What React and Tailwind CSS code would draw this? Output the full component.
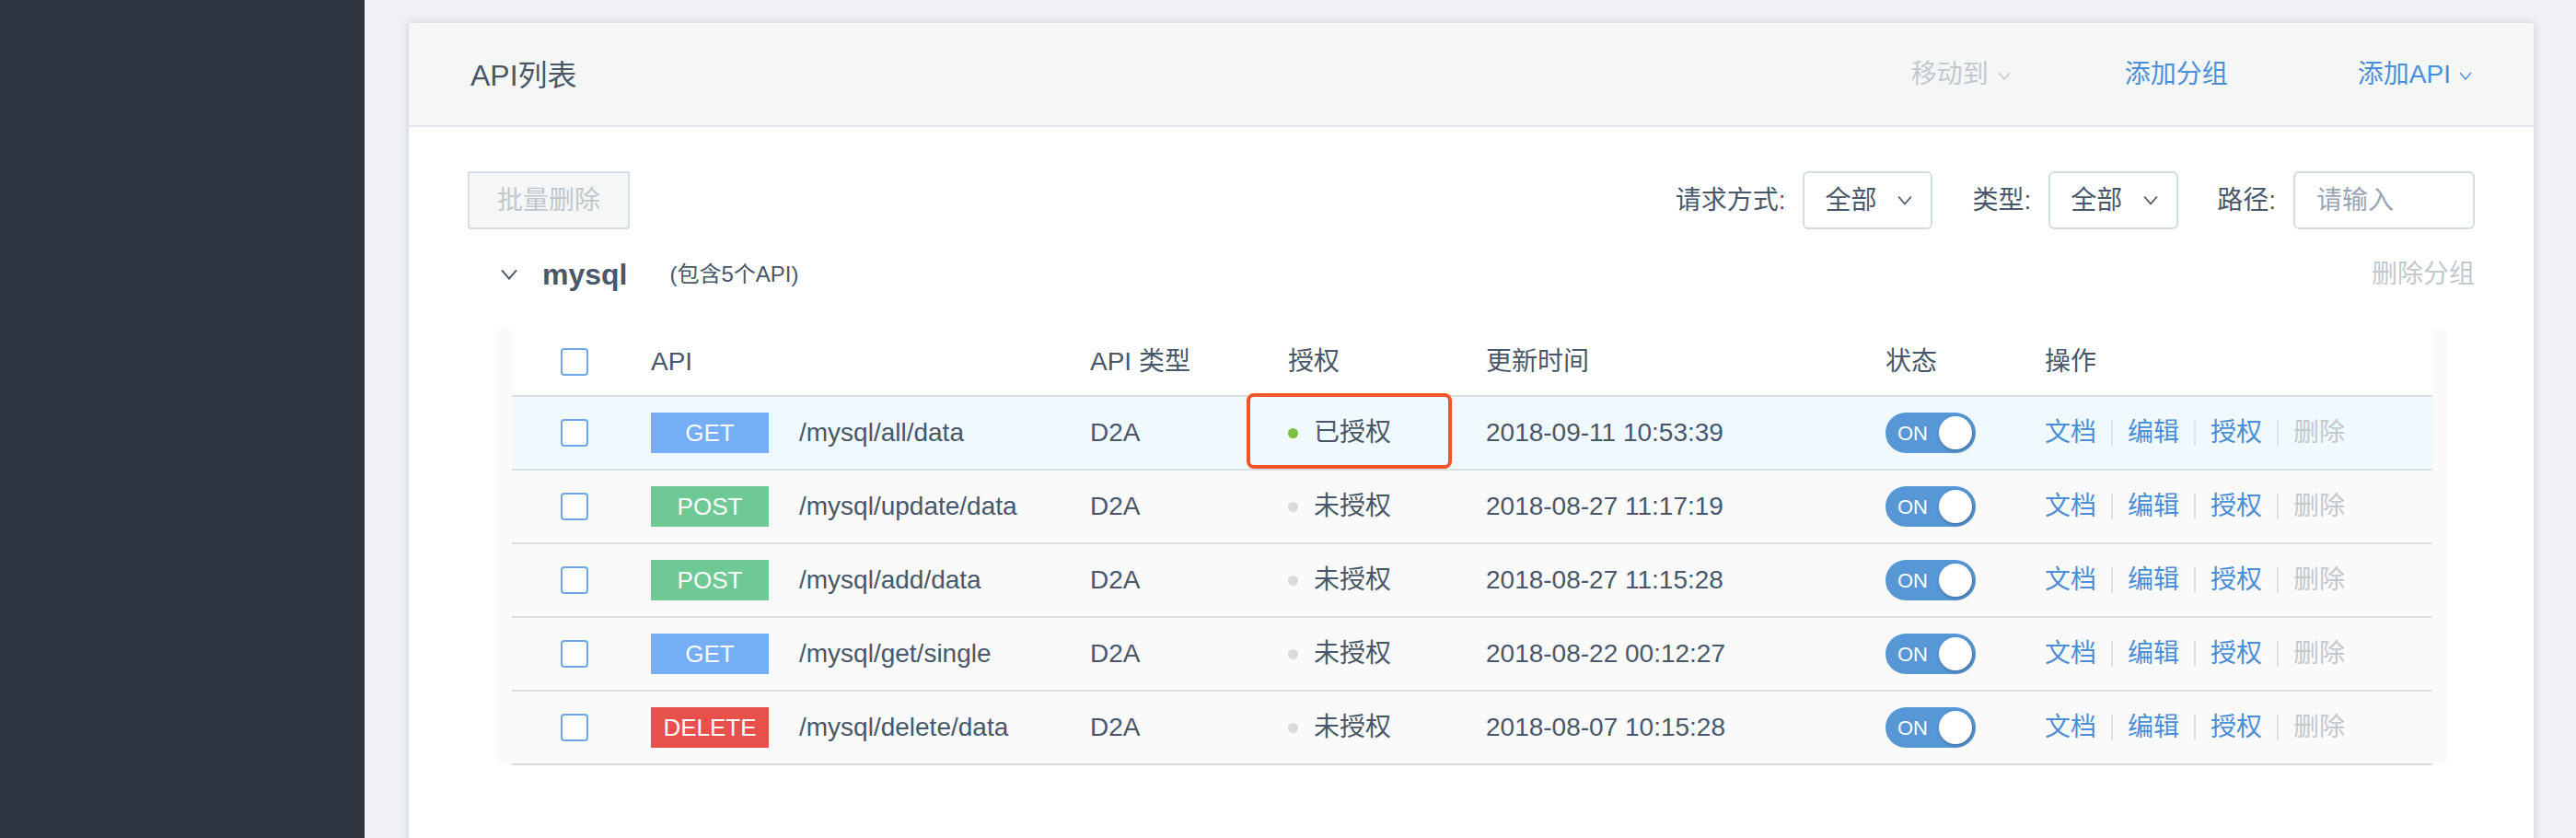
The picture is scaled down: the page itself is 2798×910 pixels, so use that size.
import React from 'react';

const FONT = { fontFamily: '"Liberation Sans", "Noto Sans CJK SC", sans-serif' };

const rows = [
  { method: 'GET', path: '/mysql/all/data', auth: true, time: '2018-09-11 10:53:39', active: true },
  { method: 'POST', path: '/mysql/update/data', auth: false, time: '2018-08-27 11:17:19' },
  { method: 'POST', path: '/mysql/add/data', auth: false, time: '2018-08-27 11:15:28' },
  { method: 'GET', path: '/mysql/get/single', auth: false, time: '2018-08-22 00:12:27' },
  { method: 'DELETE', path: '/mysql/delete/data', auth: false, time: '2018-08-07 10:15:28' },
];

const methodColor = {
  GET: 'bg-[#75adf6]',
  POST: 'bg-[#6fc995]',
  DELETE: 'bg-[#e8504b]',
};

// thin "v" chevron
const Chevron = ({ className, w = 1.6 }) => (
  <svg viewBox="0 0 14 9" className={className} fill="none" stroke="currentColor" strokeWidth={w}>
    <path d="M1 1 L7 8 L13 1" />
  </svg>
);

const Checkbox = () => (
  <div className="w-[30px] h-[30px] rounded-[4px] border-2 border-[#6fa6e8] bg-white" />
);

const Toggle = () => (
  <div className="w-[98px] h-[44px] rounded-full bg-[#5797d6] flex items-center justify-between pl-[13px] pr-[4px]">
    <span className="text-[22px] text-white">ON</span>
    <span className="w-[36px] h-[36px] rounded-full bg-white shadow-[1px_2px_4px_rgba(0,0,0,0.25)]" />
  </div>
);

const Sep = () => <span className="w-[2px] h-[28px] bg-[#dde2ea] mx-[16px]" />;

const grid = 'grid grid-cols-[151px_477px_215px_215px_434px_173px_1fr] items-center';

export default function App() {
  return (
    <div className="flex h-[910px] w-[2798px] overflow-hidden bg-[#eff1f4] text-[#48576a]" style={FONT}>
      {/* sidebar */}
      <div className="w-[396px] shrink-0 bg-[#2e3340]" />

      {/* main */}
      <div className="flex-1 pt-[25px] pl-[48px] pr-[46px]">
        <div className="bg-white h-[900px] shadow-[0_0_10px_rgba(0,0,0,0.14)]">
          {/* card header */}
          <div className="h-[113px] bg-[#f5f7f7] border-b-2 border-[#e2e6ea] flex items-center justify-between pl-[67px] pr-[67px]">
            <h2 className="text-[32px] text-[#48576a] mt-[2px]">API列表</h2>
            <div className="flex items-center text-[28px]">
              <span className="flex items-center text-[#c4c8cf]">
                移动到
                <Chevron className="w-[14px] h-[9px] ml-[10px] mt-[4px]" w={1.4} />
              </span>
              <span className="ml-[124px] text-[#4a8fd6]">添加分组</span>
              <span className="ml-[141px] flex items-center text-[#4a8fd6]">
                添加API
                <Chevron className="w-[14px] h-[9px] ml-[9px] mt-[4px]" w={1.4} />
              </span>
            </div>
          </div>

          {/* body */}
          <div className="px-[64px] pt-[48px]">
            {/* toolbar */}
            <div className="flex items-center justify-between h-[63px]">
              <button className="w-[176px] h-[63px] border-2 border-[#d8dde6] bg-[#f5f7f7] text-[28px] text-[#c2c6cd] rounded-[2px]">
                批量删除
              </button>
              <div className="flex items-center text-[28px]">
                <span>请求方式:</span>
                <div className="ml-[19px] w-[141px] h-[63px] border-2 border-[#d3dbe5] rounded-[6px] flex items-center pl-[22px] pr-[20px] justify-between">
                  <span>全部</span>
                  <Chevron className="w-[16px] h-[11px] text-[#48576a]" w={1.5} />
                </div>
                <span className="ml-[43px]">类型:</span>
                <div className="ml-[19px] w-[141px] h-[63px] border-2 border-[#d3dbe5] rounded-[6px] flex items-center pl-[22px] pr-[20px] justify-between">
                  <span>全部</span>
                  <Chevron className="w-[16px] h-[11px] text-[#48576a]" w={1.5} />
                </div>
                <span className="ml-[42px]">路径:</span>
                <div className="ml-[19px] w-[197px] h-[63px] border-2 border-[#d3dbe5] rounded-[6px] flex items-center pl-[23px]">
                  <span className="text-[#9aa5b4]">请输入</span>
                </div>
              </div>
            </div>

            {/* group header */}
            <div className="mt-[19px] h-[60px] flex items-center justify-between">
              <div className="flex items-center">
                <Chevron className="ml-[35px] w-[20px] h-[12px] text-[#48576a]" w={1.4} />
                <span className="ml-[26px] text-[32px] font-bold text-[#48576a]">mysql</span>
                <span className="ml-[46px] text-[24px] text-[#48576a]">(包含5个API)</span>
              </div>
              <span className="text-[28px] text-[#c4c8cf]">删除分组</span>
            </div>

            {/* table */}
            <div className="mt-[28px] ml-[32px] mr-[30px] bg-[#fafafa] rounded-[6px] px-[16px]">
              <div className={`${grid} h-[75px] bg-white border-b-2 border-[#d8dde6] text-[28px]`}>
                <div className="pl-[53px]"><Checkbox /></div>
                <div>API</div>
                <div>API 类型</div>
                <div>授权</div>
                <div>更新时间</div>
                <div>状态</div>
                <div>操作</div>
              </div>
              {rows.map((r) => (
                <div
                  key={r.path}
                  className={`${grid} h-[80px] border-b-2 border-[#d8dde6] text-[28px] ${r.active ? 'bg-[#f0f9fd]' : 'bg-[#fafafa]'}`}
                >
                  <div className="pl-[53px]"><Checkbox /></div>
                  <div className="flex items-center">
                    <span className={`w-[128px] h-[44px] flex items-center justify-center text-[26px] text-white ${methodColor[r.method]}`}>
                      {r.method}
                    </span>
                    <span className="ml-[33px]">{r.path}</span>
                  </div>
                  <div>D2A</div>
                  <div className="relative flex items-center h-full">
                    <span className={`w-[11px] h-[11px] rounded-full ${r.auth ? 'bg-[#7bc143]' : 'bg-[#d9d9d9]'}`} />
                    <span className="ml-[17px]">{r.auth ? '已授权' : '未授权'}</span>
                    {r.active && (
                      <div className="absolute left-[-45px] top-[-4px] w-[223px] h-[82px] border-[4px] border-[#ef5527] rounded-[8px]" />
                    )}
                  </div>
                  <div>{r.time}</div>
                  <div><Toggle /></div>
                  <div className="flex items-center text-[#4a8fd6]">
                    <span>文档</span>
                    <Sep />
                    <span>编辑</span>
                    <Sep />
                    <span>授权</span>
                    <Sep />
                    <span className="text-[#c4c8cf]">删除</span>
                  </div>
                </div>
              ))}
            </div>
          </div>
        </div>
      </div>
    </div>
  );
}
